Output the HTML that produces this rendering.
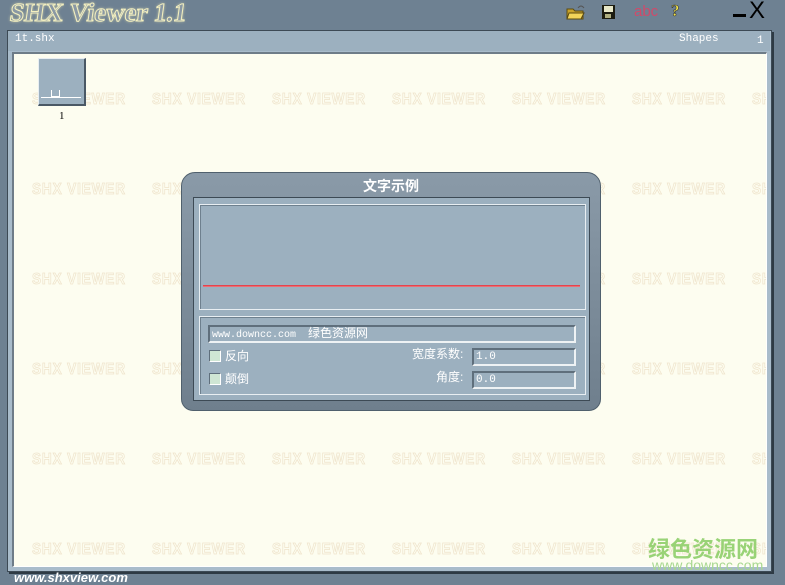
<!DOCTYPE html>
<html><head><meta charset="utf-8"><style>
*{margin:0;padding:0;box-sizing:border-box}
body{width:785px;height:585px;overflow:hidden;background:#6e8192;font-family:"Liberation Sans","Noto Sans CJK SC",sans-serif;position:relative}
.a{position:absolute}
.title{left:10px;top:-2px;font:bold 26px "Liberation Serif",serif;color:#8a98a4;-webkit-text-stroke:1px #f4f0c0;letter-spacing:0;text-shadow:0 0 3px #e8e4b0;transform:skewX(-8deg)}
.frame{left:7px;top:30px;width:765px;height:542px;background:#a9bccb;border:1px solid #3d4a55;box-shadow:2px 2px 0 #2e3a44}
.hdr{left:8px;top:31px;width:762px;height:20px;background:#9cb0bf;font:11px "Liberation Mono","DejaVu Sans Mono",monospace;color:#fff}
.content{left:12px;top:52px;width:755px;height:515px;background:#fdfdf0;border-top:2px solid #6e7c88;border-left:2px solid #6e7c88;border-right:1px solid #fff;border-bottom:1px solid #fff;overflow:hidden}
.wm{position:absolute;font:bold 16px "Liberation Sans Narrow","Liberation Sans",sans-serif;color:#fdfdf0;-webkit-text-stroke:0.8px #efe4cc;letter-spacing:1px;white-space:nowrap;transform:scaleX(.85);transform-origin:left}
.dlg{left:181px;top:172px;width:420px;height:239px;background:linear-gradient(#8a9aa8,#6f7f8d);border-radius:14px 14px 12px 12px;border:1px solid #50606d}
.inner{left:193px;top:197px;width:397px;height:204px;background:#9cb0bf;border:1px solid #3d4a55}
.box{position:absolute;border:1px solid #e8eef2;box-shadow:inset 1px 1px 0 #6e808e}
.fld{position:absolute;background:#9cb0bf;border:2px solid #5f6f7c;border-right-color:#eef2f4;border-bottom-color:#eef2f4;font:11px "Liberation Mono","Noto Sans CJK SC",monospace;color:#fff;padding-left:2px;line-height:14px}
.cb{position:absolute;width:12px;height:12px;background:#cfe6d4;border:1px solid #5f6f7c;border-right-color:#fff;border-bottom-color:#fff}
.lb{position:absolute;font-size:12px;color:#fff;font-family:"Liberation Sans","Noto Sans CJK SC",sans-serif}
</style></head><body>
<div class="a title">SHX Viewer 1.1</div>
<svg class="a" style="left:566px;top:4px" width="20" height="16"><path d="M1 5h6l2 2h8v8H1z" fill="#c9a32a" stroke="#5a4a10"/><path d="M3 9h15l-3 6H1z" fill="#f2d45a" stroke="#5a4a10"/><path d="M12 4q3-4 6 0" stroke="#555" fill="none"/></svg>
<svg class="a" style="left:601px;top:4px" width="15" height="16"><rect x="1" y="1" width="13" height="14" fill="#1c1c10"/><rect x="3" y="2" width="9" height="6" fill="#e8e8c8"/><rect x="4" y="10" width="6" height="4" fill="#b0b080"/></svg>
<div class="a" style="left:634px;top:3px;font:15px 'Liberation Sans',sans-serif;color:#d04a6a">abc</div>
<div class="a" style="left:671px;top:1px;font:bold 17px 'Liberation Serif',serif;color:#f3e64a;-webkit-text-stroke:0.6px #333">?</div>
<div class="a" style="left:733px;top:14px;width:13px;height:3px;background:#000"></div>
<div class="a" style="left:749px;top:-3px;font:24px 'Liberation Sans',sans-serif;color:#000">X</div>
<div class="a frame"></div>
<div class="a hdr"><span class="a" style="left:7px;top:2px">1t.shx</span><span class="a" style="left:671px;top:2px">Shapes</span><span class="a" style="left:749px;top:4px">1</span></div>
<div class="a content">
<div id="w"></div>
<div class="a" style="left:24px;top:4px;width:48px;height:48px;background:#9cb0bf;border:1px solid #e8eef2;border-right:2px solid #4a5865;border-bottom:2px solid #4a5865"></div>
<div class="a" style="left:27px;top:43px;width:40px;height:1px;background:#fff"></div>
<div class="a" style="left:37px;top:36px;width:9px;height:7px;border:1px solid #fff;border-top:none"></div>
<div class="a" style="left:45px;top:56px;font:11px 'Liberation Serif',serif;color:#000">1</div>
</div>
<div class="a" style="left:648px;top:533px;font:bold 22px 'Noto Sans CJK SC',sans-serif;color:#8fcf6a;opacity:.9;line-height:30px">绿色资源网</div>
<div class="a" style="left:652px;top:557px;font:14px 'Liberation Sans',sans-serif;color:#a8d890">www.downcc.com</div>
<div class="a" style="left:14px;top:570px;font:italic bold 13px 'Liberation Sans',sans-serif;color:#fff">www.shxview.com</div>
<div class="a dlg"></div>
<div class="a" style="left:181px;top:176px;width:420px;text-align:center;font:bold 14px 'Noto Sans CJK SC',sans-serif;color:#fff">文字示例</div>
<div class="a inner">
<div class="box" style="left:5px;top:6px;width:387px;height:106px"></div>
<div class="a" style="left:9px;top:87px;width:377px;height:2px;background:linear-gradient(#e0303a,#f08088)"></div>
<div class="box" style="left:5px;top:118px;width:387px;height:79px"></div>
<div class="fld" style="left:14px;top:127px;width:368px;height:18px;font-size:10px">www.downcc.com&nbsp; <span style="font-size:12px">绿色资源网</span></div>
<div class="cb" style="left:15px;top:152px"></div><div class="lb" style="left:31px;top:149px">反向</div>
<div class="cb" style="left:15px;top:175px"></div><div class="lb" style="left:31px;top:172px">颠倒</div>
<div class="lb" style="left:218px;top:147px">宽度系数:</div>
<div class="lb" style="left:242px;top:170px">角度:</div>
<div class="fld" style="left:278px;top:150px;width:104px;height:18px">1.0</div>
<div class="fld" style="left:278px;top:173px;width:104px;height:18px">0.0</div>
</div>
<script>
var h='';for(var r=0;r<6;r++)for(var c=0;c<7;c++){h+='<div class="wm" style="left:'+(18+c*120)+'px;top:'+(37+r*90)+'px">SHX VIEWER</div>';}
document.getElementById('w').innerHTML=h;
</script>
</body></html>
